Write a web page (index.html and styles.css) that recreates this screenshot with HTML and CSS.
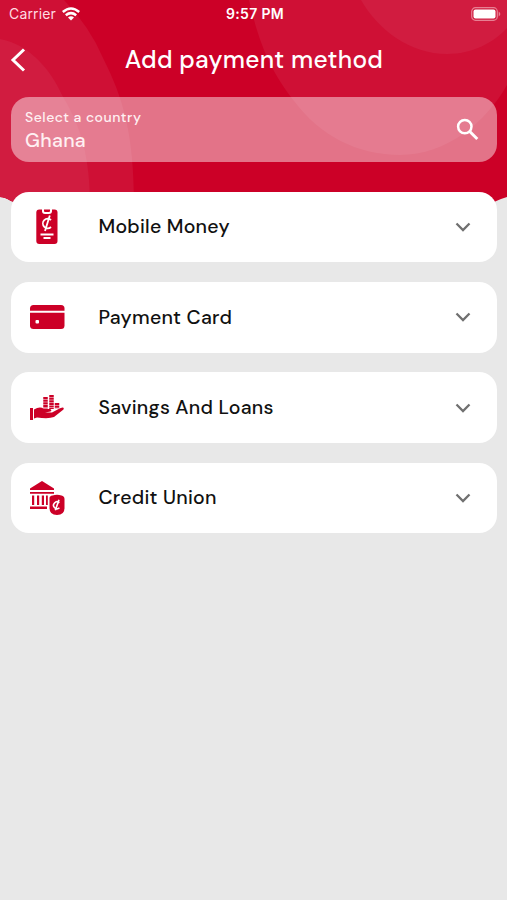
FILE: index.html
```
<!DOCTYPE html>
<html lang="en">
  <head>
    <meta charset="UTF-8" />
    <meta name="viewport" content="width=device-width, initial-scale=1.0" />
    <title>Add payment method</title>
    <link rel="stylesheet" href="styles.css" />
  </head>
  <body>
    <svg class="backdrop" viewBox="0 0 507 206" width="507" height="206">
      <path fill="#cc0027" d="M0 0H507V197Q500 199 494 202L470 206H30L11 201Q5 197 0 197Z" />
      <path fill="#cf1035" d="M0 0H64Q90 27 103 58C123 98 134 132 134 206H30L11 201Q5 197 0 197Z" />
      <path fill="#d11c40" d="M0 39C28 44 50 68 62 95C82 128 90 158 90 206H30L11 201Q5 197 0 197Z" />
      <path fill="#cf1035" d="M249 0C260 48 272 72 294 101C320 136 358 155 400 155C447 155 486 122 507 85V0Z" />
      <path fill="#d11c40" d="M361 0C378 30 410 54 447 54C472 54 493 43 507 28V0Z" />
    </svg>

    <div class="status-bar">
      <div class="carrier">
        <span>Carrier</span>
        <svg width="18" height="14" viewBox="0 0 18 14" fill="none" stroke="#fff" stroke-width="2.5">
          <path d="M0.8 5Q9 -2 17.2 5" />
          <path d="M3.8 8.3Q9 4 14.2 8.3" />
          <path d="M6 10.5Q9 8.2 12 10.5L9 13.6Z" fill="#fff" stroke="none" />
        </svg>
      </div>
      <div class="time">9:57 PM</div>
      <svg class="battery" width="30" height="14" viewBox="0 0 30 14">
        <rect x="0.7" y="0.7" width="25.6" height="12.6" rx="3.8" fill="none" stroke="#e78093" stroke-width="1.2" />
        <rect x="2.5" y="2.5" width="22" height="9" rx="2" fill="#fff" />
        <path d="M27.7 4.5Q31 7 27.7 9.5Z" fill="#e78093" />
      </svg>
    </div>

    <div class="title-bar">
      <svg class="back" width="16" height="24" viewBox="0 0 16 24" fill="none" stroke="#fff" stroke-width="3">
        <path d="M14 1.5L3 12L14 22.5" />
      </svg>
      <h1>Add payment method</h1>
    </div>

    <div class="country">
      <div>
        <div class="country-label">Select a country</div>
        <div class="country-name">Ghana</div>
      </div>
      <svg width="23" height="23" viewBox="0 0 23 23" fill="none" stroke="#fff" stroke-width="2.5">
        <circle cx="8.8" cy="8.6" r="6.7" />
        <path d="M13.5 13.3L21.3 21" stroke-width="3" />
      </svg>
    </div>

    <div class="methods">
      <div class="method">
        <svg class="icon" width="36" height="36" viewBox="0 0 36 36">
          <rect x="7.3" y="0.5" width="21.2" height="34.5" rx="3" fill="#cc0027" />
          <path d="M13 0H23V2Q23 5 20 5H16Q13 5 13 2Z" fill="#fff" />
          <path d="M15 0.5H21V2Q21 3 20 3H16Q15 3 15 2Z" fill="#cc0027" />
          <path d="M22 11A4.8 4.8 0 1 0 22 18M20.8 6.5L16 22" fill="none" stroke="#fff" stroke-width="1.8" />
          <path d="M11.5 25.5H24.5M14.5 29H21.5" stroke="#fff" stroke-width="1.8" />
        </svg>
        <span class="name">Mobile Money</span>
        <svg class="chevron" width="16" height="10" viewBox="0 0 16 10"><path d="M1.5 1.5L8 8L14.5 1.5" /></svg>
      </div>
      <div class="method">
        <svg class="icon" width="36" height="36" viewBox="0 0 36 36">
          <rect x="1" y="6" width="34.5" height="24" rx="3.5" fill="#cc0027" />
          <path d="M0 12.8H36" stroke="#fff" stroke-width="2" />
          <rect x="6.5" y="21" width="3.5" height="3.5" rx="1" fill="#fff" />
        </svg>
        <span class="name">Payment Card</span>
        <svg class="chevron" width="16" height="10" viewBox="0 0 16 10"><path d="M1.5 1.5L8 8L14.5 1.5" /></svg>
      </div>
      <div class="method">
        <svg class="icon" width="36" height="36" viewBox="0 0 36 36" fill="#cc0027">
          <path d="M1 18H4V30H1ZM5 19.5Q11 16 15 19H21Q23.5 20 21.5 21.5L16 22.5H23L31 18.2Q36 16.5 34.5 19.5L25 27Q20 29 8 27.5L5 28.5Z" />
          <path d="M16.5 7V18.5M22.5 5V19M28 13V18.5" stroke="#cc0027" stroke-width="4.5" stroke-dasharray="2.1 .5" />
        </svg>
        <span class="name">Savings And Loans</span>
        <svg class="chevron" width="16" height="10" viewBox="0 0 16 10"><path d="M1.5 1.5L8 8L14.5 1.5" /></svg>
      </div>
      <div class="method">
        <svg class="icon" width="36" height="36" viewBox="0 0 36 36" fill="#cc0027">
          <path d="M1 8.5L13 1L25 8.5V10H1Z" />
          <path d="M1 12H25V13.8H1ZM3 15.5H5.2V25H3ZM8 15.5H10.2V25H8ZM12.8 15.5H15V25H12.8ZM17 15.5H18.8V25H17ZM1 26.5H18V29H1Z" />
          <path d="M20.5 18Q20.5 16 23.5 15.5Q28 14 32.5 15.5Q35.5 16 35.5 19V28Q35.5 35 28 35Q20.5 35 20.5 28Z" />
          <path d="M30.3 22.8A3.4 3.4 0 1 0 30.4 27.7M30 19.8L26.3 30.3" fill="none" stroke="#fff" stroke-width="1.6" />
        </svg>
        <span class="name">Credit Union</span>
        <svg class="chevron" width="16" height="10" viewBox="0 0 16 10"><path d="M1.5 1.5L8 8L14.5 1.5" /></svg>
      </div>
    </div>
  </body>
</html>
```
FILE: styles.css
```
* {
  box-sizing: border-box;
}

body {
  position: relative;
  margin: 0;
  height: 900px;
  overflow: hidden;
  background: #e8e8e8;
  color: #111;
  font-family: "DM Sans", Inter, sans-serif;
}

svg {
  display: block;
  flex-shrink: 0;
}

.backdrop {
  position: absolute;
  top: 0;
  left: 0;
  z-index: -1;
}

.status-bar {
  display: grid;
  grid-template-columns: 1fr auto 1fr;
  align-items: center;
  height: 27px;
  padding: 0 6px 0 9px;
  color: #fff;
  font-family: Inter, sans-serif;
  font-size: 14px;
}

.carrier {
  display: flex;
  align-items: center;
  gap: 6px;
  color: #ffdce2;
  letter-spacing: 0.15px;
}

.time {
  font-weight: 600;
  font-size: 14px;
  letter-spacing: 0.3px;
}

.battery {
  justify-self: end;
}

.title-bar {
  display: grid;
  grid-template-columns: 1fr auto 1fr;
  align-items: center;
  height: 66px;
  padding: 0 9px 1px 10px;
  color: #fff;
}

h1 {
  margin: 0;
  font-size: 24.5px;
  font-weight: 500;
  letter-spacing: 0.25px;
}

.country {
  display: flex;
  align-items: center;
  justify-content: space-between;
  height: 65px;
  margin: 4px 10px 0 11px;
  padding: 0 18px 0 14px;
  border-radius: 18px;
  background: rgba(255, 255, 255, 0.45);
  color: #fff0f2;
}

.country-label {
  font-size: 14px;
  font-weight: 500;
  line-height: 21px;
  letter-spacing: 0.5px;
}

.country-name {
  font-size: 19.5px;
  font-weight: 500;
  line-height: 25px;
  letter-spacing: 0.3px;
}

.methods {
  display: flex;
  flex-direction: column;
  gap: 19.7px;
  margin: 29.5px 10px 0 11px;
}

.method {
  display: flex;
  align-items: center;
  height: 70.7px;
  padding: 0 26px 0 18px;
  border-radius: 18px;
  background: #fff;
}

.name {
  flex: 1;
  margin-left: 33.5px;
  font-size: 19.5px;
  font-weight: 500;
  letter-spacing: 0.25px;
}

.chevron {
  fill: none;
  stroke: #707070;
  stroke-width: 2.3px;
}
```
